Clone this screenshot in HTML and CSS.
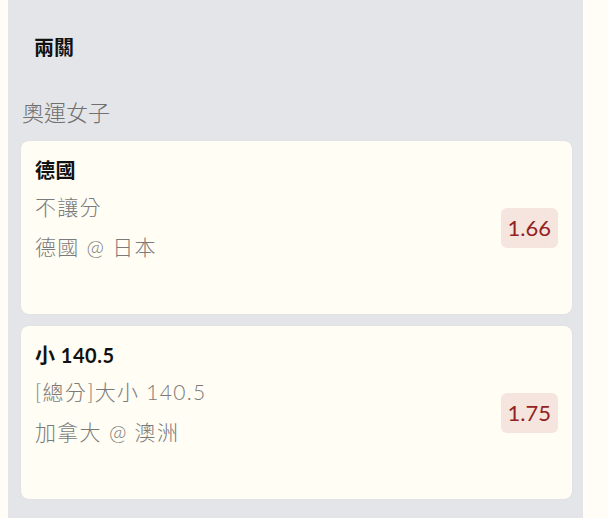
FILE: index.html
```html
<!DOCTYPE html>
<html lang="zh-Hant">
<head>
    <meta charset="UTF-8">
    <meta name="viewport" content="width=device-width, initial-scale=1.0">
    <title>兩關</title>
    <link rel="stylesheet" href="styles.css">
</head>
<body>

    <div class="panel">
        <h2 class="panel-title">兩關</h2>

        <div class="league">奧運女子</div>

        <div class="bet-card">
            <div class="bet-info">
                <div class="bet-pick">德國</div>
                <div class="bet-market">不讓分</div>
                <div class="bet-match">德國 @ 日本</div>
            </div>
            <span class="bet-odds">1.66</span>
        </div>

        <div class="bet-card">
            <div class="bet-info">
                <div class="bet-pick">小 140.5</div>
                <div class="bet-market">[總分]大小 140.5</div>
                <div class="bet-match">加拿大 @ 澳洲</div>
            </div>
            <span class="bet-odds">1.75</span>
        </div>
    </div>

</body>
</html>
```

FILE: styles.css
```css
body {
    font-family: Lato, "Noto Sans CJK TC", sans-serif;
    background-color: #fffdf5;
    margin: 0;
    padding: 0;
}

.panel {
    background-color: #e4e5e8;
    width: 575px;
    margin-left: 8px;
    padding: 34px 11px 20px 13px;
    box-sizing: border-box;
    min-height: 518px;
}

.panel-title {
    font-size: 20px;
    font-weight: bold;
    color: #111;
    margin: 0 0 38px 13px;
    line-height: 26px;
}

.league {
    font-size: 22px;
    font-weight: 300;
    color: #707070;
    margin: 0 0 13px 1px;
    line-height: 30px;
}

.bet-card {
    background-color: #fffdf4;
    border-radius: 8px;
    box-shadow: 0 0 2px rgba(0, 0, 0, 0.06);
    padding: 0 14px 0 14px;
    height: 173px;
    box-sizing: border-box;
    margin-bottom: 12px;
    display: flex;
    align-items: center;
}

.bet-info {
    flex: 1;
    align-self: flex-start;
    padding-top: 16px;
}

.bet-pick {
    font-size: 20px;
    font-weight: bold;
    color: #111;
    line-height: 26px;
    letter-spacing: 0.5px;
}

.bet-market,
.bet-match {
    font-size: 21px;
    font-weight: 300;
    color: #7a7a7a;
    line-height: 30px;
    letter-spacing: 1.3px;
}

.bet-market {
    margin-top: 9px;
}

.bet-match {
    margin-top: 10px;
}

.bet-odds {
    background-color: #f5e5de;
    color: #942222;
    font-size: 22px;
    border-radius: 6px;
    padding: 6px 7px;
    line-height: 28px;
}
```
